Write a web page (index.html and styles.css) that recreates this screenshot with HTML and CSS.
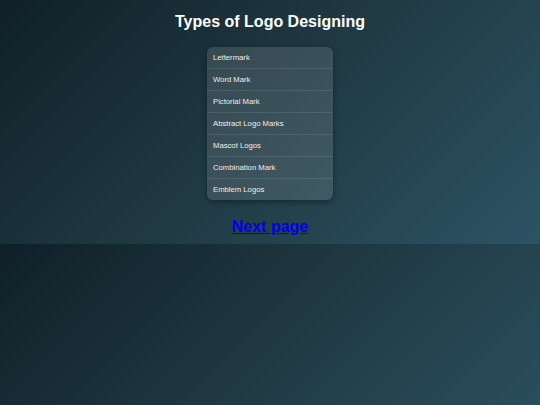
FILE: index.html
```html
<!DOCTYPE html>
<html>
<head>
<meta charset="utf-8">
<title>Types of Logo Designing</title>
<link rel="stylesheet" href="styles.css">
</head>
<body>
<div class="page">
  <h1 class="title">Types of Logo Designing</h1>
  <ul class="menu">
    <li class="item">Lettermark</li>
    <li class="item">Word Mark</li>
    <li class="item">Pictorial Mark</li>
    <li class="item">Abstract Logo Marks</li>
    <li class="item">Mascot Logos</li>
    <li class="item">Combination Mark</li>
    <li class="item">Emblem Logos</li>
  </ul>
  <p class="next"><a class="next-link" href="#">Next page</a></p>
</div>
</body>
</html>
```
FILE: styles.css
```css
body {
  margin: 0;
  background: linear-gradient(135deg, #0f2027, #203a43, #2c5364);
  font-family: "Liberation Sans", Arial, sans-serif;
}
.page {
  display: flex;
  flex-direction: column;
  align-items: center;
  padding: 11.5px 0 8px;
}
.title {
  margin: 0 0 15.5px;
  font-size: 16px;
  line-height: 20px;
  color: #fff;
  font-weight: bold;
}
.menu {
  list-style: none;
  margin: 0;
  padding: 0;
  width: 126px;
  border-radius: 6px;
  background: rgba(255, 255, 255, 0.12);
  box-shadow: 0 2px 6px rgba(0, 0, 0, 0.35);
  overflow: hidden;
}
.item {
  font-size: 7.7px;
  line-height: 10px;
  padding: 5.5px 6px;
  color: #eeeeee;
  border-bottom: 1px solid rgba(255, 255, 255, 0.1);
}
.item:last-child {
  border-bottom: none;
}
.next {
  margin: 17.5px 0 0;
  font-size: 16px;
  line-height: 18.4px;
  font-weight: bold;
}
.next-link {
  color: #0000ee;
}
```
